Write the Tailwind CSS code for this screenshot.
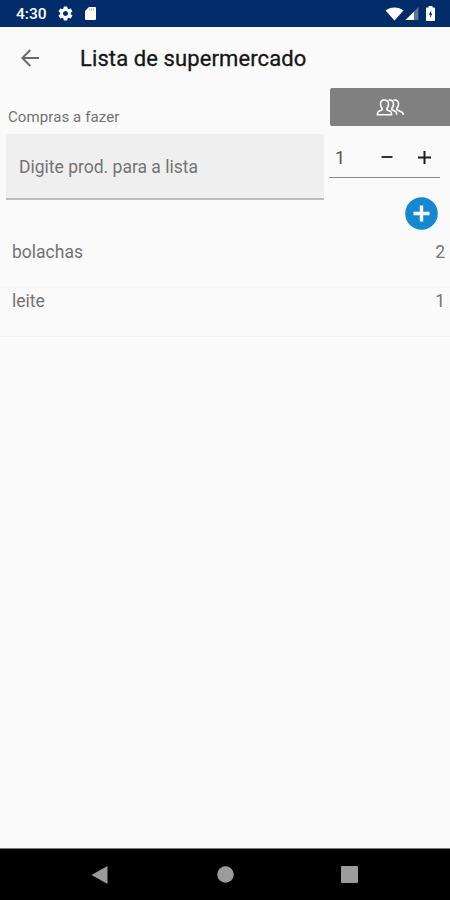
<!DOCTYPE html>
<html lang="pt">
<head>
    <meta charset="UTF-8">
    <meta name="viewport" content="width=device-width, initial-scale=1.0">
    <title>Lista de supermercado</title>
    <script src="https://cdn.jsdelivr.net/npm/@tailwindcss/browser@4"></script>
</head>
<body class="bg-[#fafafa] font-['Roboto',sans-serif] text-[#737373]">
    <div class="flex flex-col w-[450px] h-[900px] overflow-hidden">

        <!-- Status bar -->
        <div class="flex items-center h-[27px] shrink-0 bg-[#002d6a] pl-4 pr-[15px] text-white">
            <span class="w-[41px] pt-[3px] text-[15.5px] leading-none font-medium">4:30</span>
            <svg class="w-[17px] h-[17px]" viewBox="0 0 24 24" fill="currentColor"><path d="M19.43 12.98c.04-.32.07-.64.07-.98s-.03-.66-.07-.98l2.11-1.65c.19-.15.24-.42.12-.64l-2-3.46c-.12-.22-.39-.3-.61-.22l-2.49 1c-.52-.4-1.08-.73-1.69-.98l-.38-2.65C14.46 2.18 14.25 2 14 2h-4c-.25 0-.46.18-.49.42l-.38 2.65c-.61.25-1.17.59-1.69.98l-2.49-1c-.23-.09-.49 0-.61.22l-2 3.46c-.13.22-.07.49.12.64l2.11 1.65c-.04.32-.07.65-.07.98s.03.66.07.98l-2.11 1.65c-.19.15-.24.42-.12.64l2 3.46c.12.22.39.3.61.22l2.49-1c.52.4 1.08.73 1.69.98l.38 2.65c.03.24.24.42.49.42h4c.25 0 .46-.18.49-.42l.38-2.65c.61-.25 1.17-.59 1.69-.98l2.49 1c.23.09.49 0 .61-.22l2-3.46c.12-.22.07-.49-.12-.64l-2.11-1.65zM12 15.5c-1.93 0-3.5-1.57-3.5-3.5s1.57-3.5 3.5-3.5 3.5 1.57 3.5 3.5-1.57 3.5-3.5 3.5z"/></svg>
            <svg class="w-[11px] h-[13px] ml-[11px]" viewBox="0 0 11 13"><path fill="#fff" d="M4 0h6q1 0 1 1v11q0 1-1 1H1q-1 0-1-1V4z"/><path d="M4.5 1.5v2M6.5 1.5v2M8.5 1.5v2" stroke="#7f95b8" stroke-width=".7"/></svg>
            <div class="flex items-center ml-auto">
                <svg class="w-[19px] h-[14px]" viewBox="0 0 18 14" fill="currentColor"><path d="M0 3.5C5 -0.4 13 -0.4 18 3.5L9 13.5z"/></svg>
                <svg class="w-[14px] h-[13px] ml-px" viewBox="0 0 14 14" fill="currentColor"><path fill-opacity=".35" d="M14 0v14H0z"/><path d="M9 5v9H0z"/></svg>
                <svg class="w-[9px] h-[15px] ml-[7px]" viewBox="0 0 9 15"><path fill="#fff" d="M2.5 0h4v1.5H8.2q.8 0 .8.8V14.2q0 .8-.8.8H.8Q0 15 0 14.2V2.3q0-.8.8-.8H2.5z"/><path fill="#002d6a" d="M5.2 4.2L2.9 8.7h1.3v3.3L6.3 7.6H5.1z"/></svg>
            </div>
        </div>

        <!-- App bar -->
        <div class="flex items-center h-[61px] shrink-0 pl-[21px]">
            <svg class="w-[18px] h-[18px]" viewBox="0 0 18 18" fill="none" stroke="#6a6a6a" stroke-width="1.9"><path d="M18 9H1.5M9.3 1L1.3 9l8 8"/></svg>
            <h1 class="ml-[41px] pt-[3px] text-[22px] leading-none font-normal tracking-[0.1px] text-[#161616] [-webkit-text-stroke:0.3px_#161616]">Lista de supermercado</h1>
        </div>

        <!-- Form -->
        <div class="flex h-[146px] shrink-0">
            <div class="w-[318px] pl-1.5">
                <label class="block h-[46px] pl-[2px] pt-5 text-[15px] leading-[18px] tracking-[0.1px]">Compras a fazer</label>
                <div class="flex items-center h-[66px] w-[318px] rounded-t-[3px] border-b-2 border-[#bdbdbd] bg-[#efefef] pl-[13px] pt-[2px] text-[17.5px]">Digite prod. para a lista</div>
            </div>
            <div class="flex flex-col w-[120px] ml-3">
                <button class="flex items-center justify-center h-[38px] rounded-l-[2px] bg-[#808080]">
                    <svg class="w-[29px] h-[17px]" viewBox="0 0 28 17" fill="none" stroke="#fff" stroke-width="1.6"><path d="M7.5 1C5 1 3.9 2.7 4 5c.1 2 .7 3.3 1.6 4.2v1.6L2 12.4Q.9 13 .9 15.8H15.1Q15.1 13 14 12.4L10.4 10.8V9.2C11.3 8.3 12 7 12 5 12.1 2.7 10.5 1 7.5 1z"/><path d="M12 1.2c3-.9 5.3 1 5 4.3-.1 1.7-.7 2.9-1.6 3.7v1.6l3.6 1.7q1.2.8 1.2 3.3M17 1.2c3-.9 5.3 1 5 4.3-.1 1.7-.7 2.9-1.6 3.7v1.6l4.7 2.2q1.5.7 1.9 2.8"/></svg>
                </button>
                <div class="flex items-center h-[52px] w-[111px] -ml-px border-b border-[#8c8c8c] pl-1.5 pt-[11px] pr-[9px]">
                    <span class="pt-[2px] text-[18px] leading-none text-[#555]">1</span>
                    <svg class="w-3 h-3 ml-auto" viewBox="0 0 12 12"><path d="M0.5 6h11" stroke="#333" stroke-width="2"/></svg>
                    <svg class="w-[13px] h-[13px] ml-[25px]" viewBox="0 0 13 13"><path d="M0 6.5h13M6.5 0v13" stroke="#1c1c1c" stroke-width="2"/></svg>
                </div>
                <svg class="w-[33px] h-[33px] ml-[75px] mt-[19px]" viewBox="0 0 33 33"><circle cx="16.5" cy="16.5" r="16.3" fill="#1688d2"/><path d="M8.5 16.5h16M16.5 8.5v16" stroke="#fff" stroke-width="3.4"/></svg>
            </div>
        </div>

        <!-- Items -->
        <ul class="text-[17.5px] leading-none">
            <li class="flex justify-between h-[54px] border-b border-[#f4f4f4] pt-[10px] pl-3 pr-[5px]"><span>bolachas</span><span>2</span></li>
            <li class="flex justify-between h-[49px] border-b border-[#f2f2f2] pt-[5px] pl-3 pr-[5px]"><span>leite</span><span>1</span></li>
        </ul>

        <!-- Navigation bar -->
        <div class="flex items-center h-[52px] shrink-0 mt-auto border-t border-[#777] bg-black pl-[91px] text-[#9b9b9b]">
            <svg class="w-[17px] h-[18px]" viewBox="0 0 17 18" fill="currentColor"><path d="M16.5 0v18L0.5 9z"/></svg>
            <svg class="w-[17px] h-[17px] ml-[109px]" viewBox="0 0 17 17" fill="currentColor"><circle cx="8.5" cy="8.5" r="8.3"/></svg>
            <svg class="w-[17px] h-[17px] ml-[107px]" viewBox="0 0 17 17" fill="currentColor"><rect width="17" height="17" rx="1"/></svg>
        </div>
    </div>
</body>
</html>
